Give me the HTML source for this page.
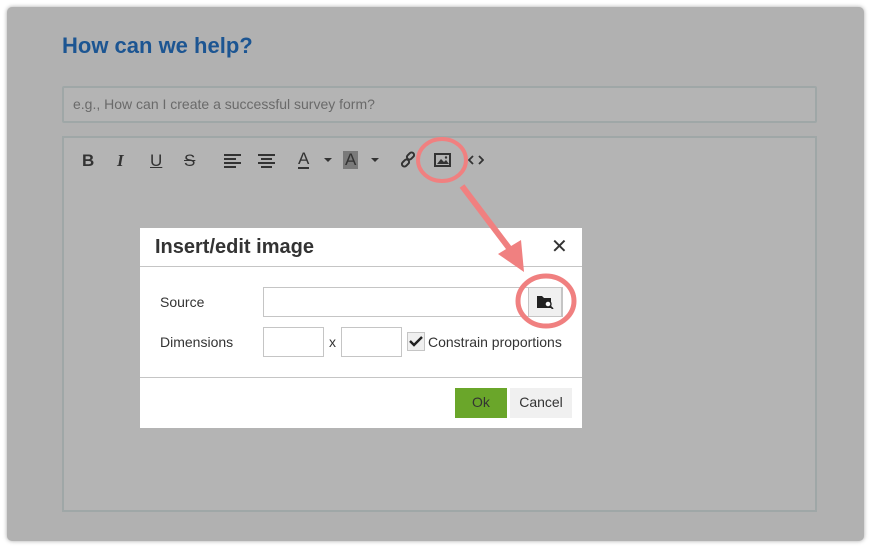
<!DOCTYPE html>
<html><head><style>
body{margin:0;width:870px;height:547px;background:#fff;position:relative;overflow:hidden;font-family:"Liberation Sans",sans-serif}
.panel{position:absolute;left:7px;top:7px;width:857px;height:534px;background:#b1b1b1;border-radius:5px;box-shadow:0 0 4px rgba(0,0,0,.35)}
h1{position:absolute;left:62px;top:33px;margin:0;font-size:22px;color:#1c5592;font-weight:bold}
.inp{position:absolute;left:62px;top:86px;width:751px;height:33px;border:2px solid #9fa7a7;border-radius:2px;background:#b4b4b4;color:#6a6a6a;font-size:14px;line-height:33px;text-indent:9px;box-sizing:content-box}
.ed{position:absolute;left:62px;top:136px;width:751px;height:372px;border:2px solid #9fa7a7;background:#b4b4b4}
.tb{position:absolute;top:151px;font-size:17px;color:#333;font-weight:bold}
.dlg{position:absolute;left:140px;top:228px;width:442px;height:200px;background:#fff}
.dlg .t{position:absolute;left:15px;top:8px;font-size:20px;font-weight:bold;color:#333}
.dlg .x{position:absolute;left:411px;top:6px;font-size:20px;color:#333}
.hl{position:absolute;left:0;width:442px;height:1px;background:#c5c5c5}
.lb{position:absolute;font-size:14px;color:#333}
.box{position:absolute;border:1px solid #c5c5c5;background:#fff;box-sizing:border-box}
</style></head><body>
<div class="panel"></div>
<h1>How can we help?</h1>
<div class="inp">e.g., How can I create a successful survey form?</div>
<div class="ed"></div>
<span class="tb" style="left:82px">B</span>
<span class="tb" style="left:117px;font-style:italic;font-family:'Liberation Serif'">I</span>
<span class="tb" style="left:150px;text-decoration:underline;font-weight:normal">U</span>
<span class="tb" style="left:184px;text-decoration:line-through;font-weight:normal">S</span>
<svg style="position:absolute;left:224px;top:153px" width="60" height="16"><g fill="#333"><rect x="0" y="1" width="17" height="2"/><rect x="0" y="5" width="12" height="2"/><rect x="0" y="9" width="17" height="2"/><rect x="0" y="13" width="12" height="2"/><rect x="34" y="1" width="17" height="2"/><rect x="37" y="5" width="11" height="2"/><rect x="34" y="9" width="17" height="2"/><rect x="37" y="13" width="11" height="2"/></g></svg>
<span class="tb" style="left:298px;font-weight:normal;border-bottom:2px solid #333;line-height:16px">A</span>
<svg style="position:absolute;left:324px;top:158px" width="10" height="6"><path d="M0 0h8L4 4z" fill="#333"/></svg>
<span class="tb" style="left:343px;font-weight:normal;background:#7a7a7a;padding:0 2px;line-height:18px">A</span>
<svg style="position:absolute;left:371px;top:158px" width="10" height="6"><path d="M0 0h8L4 4z" fill="#333"/></svg>
<svg style="position:absolute;left:400px;top:151px" width="18" height="18"><g fill="none" stroke="#333" stroke-width="2"><rect x="8" y="1" width="5" height="8" rx="2.5" transform="rotate(45 10.5 5)"/><rect x="3" y="8" width="5" height="8" rx="2.5" transform="rotate(45 5.5 12)"/></g></svg>
<svg style="position:absolute;left:434px;top:153px" width="17" height="14"><rect x="1" y="1" width="15" height="12" fill="none" stroke="#333" stroke-width="2"/><path d="M3 11l4-5 3 3 2-2 3 4z" fill="#333"/><circle cx="12" cy="4.5" r="1.2" fill="#333"/></svg>
<svg style="position:absolute;left:468px;top:154px" width="16" height="12"><path d="M5 2L1 6l4 4M11 2l4 4-4 4" fill="none" stroke="#333" stroke-width="1.8"/></svg>
<div class="dlg">
<div class="t">Insert/edit image</div><div class="x">✕</div>
<div class="hl" style="top:38px"></div>
<div class="lb" style="left:20px;top:66px">Source</div>
<div class="box" style="left:123px;top:59px;width:300px;height:30px"></div>
<div class="box" style="left:388px;top:59px;width:34px;height:30px;background:#f0f0f0"></div>
<svg style="position:absolute;left:397px;top:66px" width="17" height="15"><path d="M0 2h5l2 2h7v4H0z" fill="#222"/><path d="M0 5h14v9H0z" fill="#222"/><circle cx="11" cy="10" r="3" fill="#fff" stroke="#222" stroke-width="1.4"/><path d="M13 12l3 3" stroke="#222" stroke-width="1.6"/></svg>
<div class="lb" style="left:20px;top:106px">Dimensions</div>
<div class="box" style="left:123px;top:99px;width:61px;height:30px"></div>
<div class="lb" style="left:189px;top:106px">x</div>
<div class="box" style="left:201px;top:99px;width:61px;height:30px"></div>
<div class="box" style="left:267px;top:104px;width:18px;height:19px;background:#f0f0f0"></div>
<svg style="position:absolute;left:269px;top:107px" width="14" height="12"><path d="M1 6l4 4 8-8" fill="none" stroke="#222" stroke-width="2.4"/></svg>
<div class="lb" style="left:288px;top:106px">Constrain proportions</div>
<div class="hl" style="top:149px"></div>
<div style="position:absolute;left:315px;top:160px;width:52px;height:30px;background:#6aa62a;color:#333;font-size:14px;text-align:center;line-height:28px">Ok</div>
<div style="position:absolute;left:370px;top:160px;width:62px;height:30px;background:#f0f0f0;color:#333;font-size:14px;text-align:center;line-height:28px">Cancel</div>
</div>
<svg style="position:absolute;left:0;top:0" width="870" height="547"><g fill="none" stroke="#f08080"><ellipse cx="442" cy="160" rx="24" ry="21" stroke-width="4"/><ellipse cx="546" cy="301" rx="28" ry="25" stroke-width="5"/><path d="M462 186L512 252" stroke-width="6"/></g><path d="M498 254L524 272L521 240z" fill="#f08080"/></svg>
</body></html>
